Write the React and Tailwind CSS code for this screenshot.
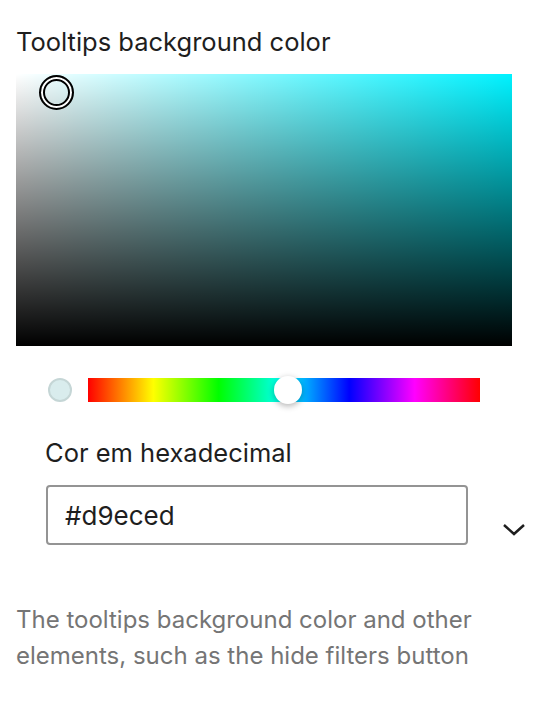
import React from 'react';

const hex = '#d9eced';

export default function App() {
  return (
    <div className="w-[538px] h-[706px] bg-white font-['Inter',sans-serif] text-[#1e1e1e]">
      <div className="pt-[27px] pl-[16px]">
        <h2 className="text-[25.5px] leading-[30px] font-normal">Tooltips background color</h2>
      </div>

      {/* Saturation / value area */}
      <div className="relative ml-[16px] mt-[17px] w-[496px] h-[272px] bg-[#00f2ff]">
        <div className="absolute inset-0 bg-[linear-gradient(to_right,#fff,rgba(255,255,255,0))]" />
        <div className="absolute inset-0 bg-[linear-gradient(to_bottom,rgba(0,0,0,0),#000)]" />
        <div className="absolute left-[23px] top-[1px] w-[35px] h-[35px] rounded-full border-2 border-black shadow-[inset_0_0_0_2px_#fff,inset_0_0_0_4px_#000]" />
      </div>

      {/* Hue row */}
      <div className="flex items-center mt-[32px] ml-[48px] h-[24px]">
        <div className="w-[24px] h-[24px] rounded-full bg-[#d9eced] border-2 border-[#c5d6d6]" />
        <div className="relative ml-[16px] w-[392px] h-[24px] bg-[linear-gradient(to_right,#f00_0%,#ff0_16.66%,#0f0_33.33%,#0ff_50%,#00f_66.66%,#f0f_83.33%,#f00_100%)]">
          <div className="absolute left-[186px] top-[-2px] w-[28px] h-[28px] rounded-full bg-white shadow-[0_2px_6px_rgba(0,0,0,0.3)]" />
        </div>
      </div>

      {/* Hex input */}
      <div className="ml-[45px] mt-[36px]">
        <label className="block text-[25.5px] leading-[30px]">Cor em hexadecimal</label>
      </div>
      <div className="flex items-center mt-[17px] ml-[46px]">
        <div className="w-[422px] h-[60px] rounded-[4px] border-2 border-[#949494] flex items-center pl-[17px]">
          <span className="text-[26px] text-[#1e1e1e]">{hex}</span>
        </div>
        <svg className="ml-[34px] mt-[30px]" width="24" height="14" viewBox="0 0 24 14" fill="none">
          <path d="M2 2l10 9 10-9" stroke="#1e1e1e" strokeWidth="2.5" />
        </svg>
      </div>

      {/* Help text */}
      <p className="mt-[57px] ml-[16px] w-[510px] text-[24px] leading-[36px] text-[#757575]">
        The tooltips background color and other elements, such as the hide filters button
      </p>
    </div>
  );
}
